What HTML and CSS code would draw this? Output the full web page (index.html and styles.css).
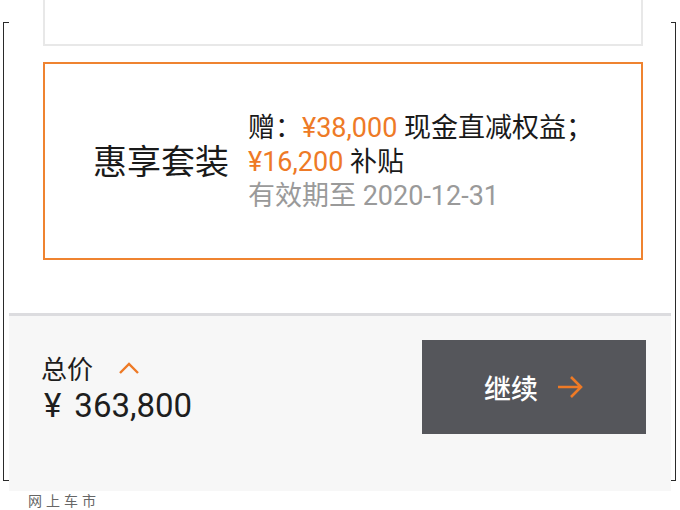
FILE: index.html
```html
<!DOCTYPE html>
<html lang="zh-CN">
<head>
<meta charset="utf-8">
<link rel="stylesheet" href="styles.css">
</head>
<body>
<div class="page">
  <div class="bracket bracket-left"></div>
  <main class="main">
    <div class="card-top"></div>
    <section class="card-offer">
      <h2 class="offer-title">惠享套装</h2>
      <div class="offer-lines">
        <p class="line">赠：<span class="orange">¥38,000</span> 现金直减权益；</p>
        <p class="line"><span class="orange">¥16,200</span> 补贴</p>
        <p class="line muted">有效期至 2020-12-31</p>
      </div>
    </section>
    <section class="total-bar">
      <div class="total-info">
        <div class="total-label">总价
          <svg class="chev" width="22" height="14" viewBox="0 0 22 14"><path d="M2 12 L11 3 L20 12" fill="none" stroke="#ee7a26" stroke-width="2.4"/></svg>
        </div>
        <div class="total-price"><span class="yen">¥</span>363,800</div>
      </div>
      <button class="btn-next">继续
        <svg class="arrow" width="28" height="24" viewBox="0 0 28 24"><path d="M2 12 H25 M15 2 L25 12 L15 22" fill="none" stroke="#ee7a26" stroke-width="2.6"/></svg>
      </button>
    </section>
    <div class="watermark">网上车市</div>
  </main>
  <div class="bracket bracket-right"></div>
</div>
</body>
</html>
```

FILE: styles.css
```css
* { box-sizing: border-box; }
html, body { margin: 0; padding: 0; background: #fff; }
body {
  width: 680px;
  height: 510px;
  overflow: hidden;
  font-family: "Roboto", "Noto Sans CJK SC", sans-serif;
  color: #1e1e1e;
}
.page {
  display: grid;
  grid-template-columns: 6px 662px 5px;
  padding-left: 3px;
  align-items: start;
}
.bracket {
  margin-top: 22px;
  height: 459px;
  border-top: 1.5px solid #2a2a2a;
  border-bottom: 1.5px solid #2a2a2a;
}
.bracket-left { border-left: 1.5px solid #2a2a2a; }
.bracket-right { border-right: 1.5px solid #2a2a2a; width: 5px; }
.main { display: flex; flex-direction: column; }
.card-top {
  height: 46px;
  margin: 0 28px 0 34px;
  border: 2px solid #e8e8e8;
  border-top: none;
}
.card-offer {
  margin: 16px 28px 0 34px;
  height: 198px;
  border: 2px solid #ef8330;
  display: flex;
  align-items: center;
  padding-left: 48px;
  padding-top: 2px;
}
.offer-title {
  margin: 0 19px 0 0;
  font-size: 34px;
  font-weight: 400;
  line-height: 1;
  color: #1a1a1a;
}
.offer-lines { display: flex; flex-direction: column; }
.line {
  margin: 0;
  font-size: 27px;
  line-height: 34px;
  color: #1a1a1a;
  white-space: nowrap;
}
.orange { color: #ee7a26; }
.muted { color: #9a9a9a; }
.total-bar {
  margin-top: 53px;
  height: 178px;
  background: #f7f7f7;
  border-top: 3px solid #dcdcdf;
  display: flex;
  justify-content: space-between;
  align-items: flex-start;
  padding: 24px 25px 0 32px;
}
.total-info { padding-top: 14px; }
.total-label {
  font-size: 26px;
  line-height: 32px;
  display: flex;
  align-items: center;
  gap: 25px;
}
.chev { margin-top: -4px; }
.total-price {
  font-size: 33px;
  line-height: 40px;
  padding-left: 3px;
}
.yen { margin-right: 13px; }
.btn-next {
  width: 224px;
  height: 94px;
  background: #55565b;
  border: none;
  color: #fff;
  font-family: "Noto Sans CJK SC", sans-serif;
  font-size: 27px;
  font-weight: 500;
  display: flex;
  align-items: center;
  justify-content: center;
  gap: 18px;
  padding: 0;
}
.watermark {
  padding-left: 19px;
  font-family: "Noto Sans CJK SC", sans-serif;
  font-size: 14px;
  letter-spacing: 4px;
  color: #666;
  line-height: 18px;
}
```
